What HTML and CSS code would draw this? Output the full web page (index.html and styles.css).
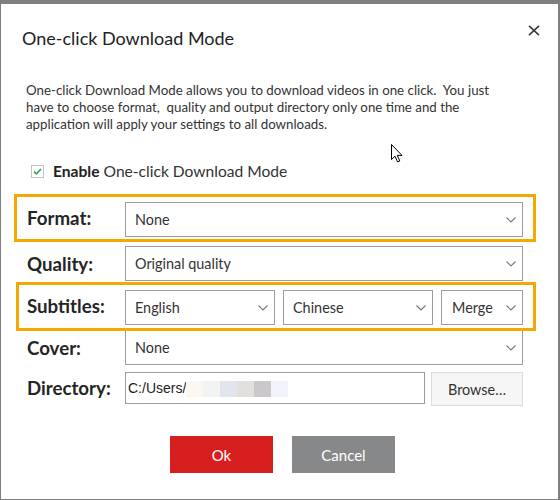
FILE: index.html
```html
<!DOCTYPE html>
<html lang="en">
<head>
<meta charset="utf-8">
<title>One-click Download Mode</title>
<link rel="stylesheet" href="styles.css">
</head>
<body>
<div class="window">
  <div class="header">
    <h1 class="title">One-click Download Mode</h1>
    <svg class="close" width="12" height="11" viewBox="0 0 12 11" aria-label="Close">
      <path d="M1 0.8 L11 10.2 M11 0.8 L1 10.2" stroke="#3a3a3a" stroke-width="1.6" fill="none"/>
    </svg>
  </div>
  <p class="desc">One-click Download Mode allows you to download videos in one click.&nbsp; You just<br>have to choose format,&nbsp; quality and output directory only one time and the<br>application will apply your settings to all downloads.</p>
  <div class="enable">
    <span class="checkbox">
      <svg width="9" height="7" viewBox="0 0 9 7"><path d="M1 3.6 L3.4 5.8 L8 1" stroke="#2fa84f" stroke-width="1.6" fill="none"/></svg>
    </span>
    <span class="enable-text"><b>Enable</b> One-click Download Mode</span>
  </div>
  <div class="form">
    <div class="row hl hl-format">
      <span class="label">Format:</span>
      <div class="select"><span>None</span><svg class="chev" width="10" height="6" viewBox="0 0 10 6"><path d="M0.5 0.5 L5 5 L9.5 0.5" stroke="#777" stroke-width="1.1" fill="none"/></svg></div>
    </div>
    <div class="row">
      <span class="label">Quality:</span>
      <div class="select"><span>Original quality</span><svg class="chev" width="10" height="6" viewBox="0 0 10 6"><path d="M0.5 0.5 L5 5 L9.5 0.5" stroke="#777" stroke-width="1.1" fill="none"/></svg></div>
    </div>
    <div class="row hl hl-subs">
      <span class="label">Subtitles:</span>
      <div class="selects">
        <div class="select sel-lang"><span>English</span><svg class="chev" width="10" height="6" viewBox="0 0 10 6"><path d="M0.5 0.5 L5 5 L9.5 0.5" stroke="#777" stroke-width="1.1" fill="none"/></svg></div>
        <div class="select sel-lang"><span>Chinese</span><svg class="chev" width="10" height="6" viewBox="0 0 10 6"><path d="M0.5 0.5 L5 5 L9.5 0.5" stroke="#777" stroke-width="1.1" fill="none"/></svg></div>
        <div class="select sel-merge"><span>Merge</span><svg class="chev" width="10" height="6" viewBox="0 0 10 6"><path d="M0.5 0.5 L5 5 L9.5 0.5" stroke="#777" stroke-width="1.1" fill="none"/></svg></div>
      </div>
    </div>
    <div class="row row-cover">
      <span class="label">Cover:</span>
      <div class="select"><span>None</span><svg class="chev" width="10" height="6" viewBox="0 0 10 6"><path d="M0.5 0.5 L5 5 L9.5 0.5" stroke="#777" stroke-width="1.1" fill="none"/></svg></div>
    </div>
    <div class="row row-dir">
      <span class="label">Directory:</span>
      <div class="dir">
        <div class="dir-input">
          <span class="path">C:/Users/</span>
          <span class="blur">
            <i class="b1"></i><i class="b2"></i><i class="b3"></i><i class="b4"></i><i class="b5"></i><i class="b6"></i>
          </span>
        </div>
        <button class="browse" type="button">Browse…</button>
      </div>
    </div>
  </div>
  <div class="actions">
    <button class="btn btn-ok" type="button">Ok</button>
    <button class="btn btn-cancel" type="button">Cancel</button>
  </div>
  <svg class="cursor" width="13" height="19" viewBox="0 0 13 19">
    <path d="M0.5 0.5 L0.5 15.5 L4 12.2 L6.6 18 L8.8 17 L6.3 11.4 L11 11.4 Z" fill="#fff" stroke="#000" stroke-width="1" stroke-linejoin="miter"/>
  </svg>
</div>
</body>
</html>
```

FILE: styles.css
```css
html, body {
  margin: 0;
  padding: 0;
  background: #fff;
}

.window {
  position: relative;
  width: 560px;
  height: 500px;
  box-sizing: border-box;
  border-style: solid;
  border-color: #7f7f7f;
  border-width: 4px 2px 1px 1px;
  background: #fff;
  font-family: Lato, "Open Sans", "Liberation Sans", sans-serif;
  color: #2b2b2b;
  overflow: hidden;
}

.header {
  display: flex;
  justify-content: space-between;
  align-items: flex-start;
  margin-top: 23px;
  padding: 0 18px 0 21px;
}

.title {
  margin: 0;
  font-size: 18px;
  line-height: 22px;
  font-weight: 400;
  color: #222;
}

.close {
  display: block;
  margin-top: -2px;
}

.desc {
  margin: 33px 0 0 0;
  padding-left: 25px;
  font-size: 13.3px;
  line-height: 17px;
  color: #333;
}

.enable {
  display: flex;
  align-items: center;
  margin-top: 29px;
  padding-left: 30px;
  height: 18px;
  font-size: 15.6px;
  line-height: 18px;
  color: #333;
}

.checkbox {
  width: 11px;
  height: 11px;
  border: 1px solid #c4c4c4;
  background: #fff;
  display: flex;
  align-items: center;
  justify-content: center;
  margin-right: 9px;
}

.checkbox svg {
  display: block;
}

.enable-text b {
  font-weight: 700;
  color: #222;
}

.form {
  display: flex;
  flex-direction: column;
  gap: 9px;
  margin-top: 22px;
  padding: 0 35px 0 26px;
}

.row {
  display: flex;
  align-items: center;
  height: 35px;
}

.row-cover {
  margin-top: -4px;
}

.row-dir {
  margin-top: -2px;
  height: 34px;
  align-items: flex-start;
}

.row-dir .label {
  line-height: 32px;
}

.hl {
  position: relative;
}

.hl::after {
  content: "";
  position: absolute;
  border: 3px solid #f5a800;
  pointer-events: none;
}

.hl-format::after {
  left: -13px;
  right: -13px;
  top: -8px;
  bottom: -5px;
}

.hl-subs::after {
  left: -11px;
  right: -13px;
  top: -8px;
  bottom: -6px;
}

.label {
  flex: 0 0 98px;
  font-size: 18.7px;
  font-weight: 700;
  line-height: 22px;
  color: #252525;
}

.hl .label {
  margin-top: -4px;
}

.select {
  flex: 1;
  height: 35px;
  box-sizing: border-box;
  border: 1px solid #9c9c9c;
  background: #fff;
  display: flex;
  align-items: center;
  justify-content: space-between;
  padding: 0 6px 0 9px;
  font-size: 14.4px;
  color: #333;
}

.chev {
  display: block;
  flex: none;
}

.selects {
  flex: 1;
  display: flex;
  gap: 8px;
}

.sel-lang {
  flex: 0 0 150px;
}

.sel-merge {
  flex: 1;
  padding-left: 10px;
}

.dir {
  flex: 1;
  display: flex;
  gap: 6px;
  align-items: flex-start;
}

.dir-input {
  flex: 0 0 300px;
  height: 32px;
  box-sizing: border-box;
  border: 1px solid #9c9c9c;
  display: flex;
  align-items: center;
  padding-left: 2px;
}

.path {
  font-family: "Liberation Sans", Arial, sans-serif;
  font-size: 14px;
  color: #222;
}

.blur {
  display: flex;
  height: 16px;
  margin-top: 1px;
}

.blur i {
  display: block;
  width: 17px;
  height: 16px;
}

.blur .b1 { background: #fcf7f1; }
.blur .b2 { background: #f1f4f3; }
.blur .b3 { background: #e1e5ee; }
.blur .b4 { background: #e2dfdc; }
.blur .b5 { background: #cbc7cd; }
.blur .b6 { background: #f1f4fa; }

.browse {
  flex: 1;
  height: 34px;
  box-sizing: border-box;
  border: 1px solid #dcdcdc;
  background: #f6f6f6;
  font-family: Lato, "Open Sans", sans-serif;
  font-size: 14.4px;
  color: #333;
  padding: 0;
  margin: 0;
}

.actions {
  display: flex;
  justify-content: center;
  gap: 19px;
  margin-top: 30px;
  padding-left: 6px;
}

.btn {
  width: 103px;
  height: 37px;
  border: none;
  margin: 0;
  padding: 0;
  font-family: Lato, "Open Sans", sans-serif;
  font-size: 15px;
  color: #fff;
}

.btn-ok {
  background: #d81f1f;
}

.btn-cancel {
  background: #87888a;
}

.cursor {
  position: absolute;
  left: 390px;
  top: 140px;
}
```
